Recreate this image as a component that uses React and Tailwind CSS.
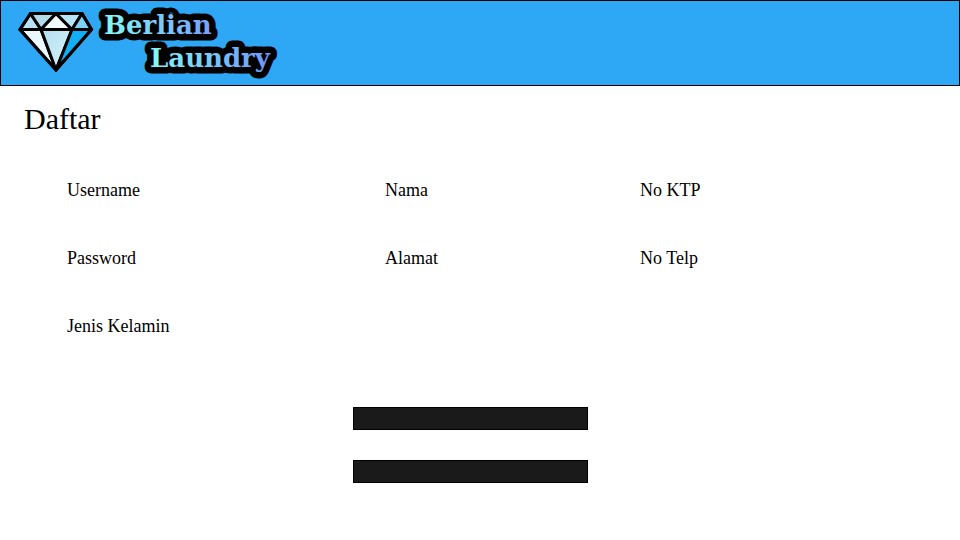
const fields = [
  { id: "username", label: "Username", type: "text" },
  { id: "nama", label: "Nama", type: "text" },
  { id: "ktp", label: "No KTP", type: "text" },
  { id: "password", label: "Password", type: "password" },
  { id: "alamat", label: "Alamat", type: "text" },
  { id: "telp", label: "No Telp", type: "tel" },
  { id: "kelamin", label: "Jenis Kelamin", type: "text" },
];

function Logo() {
  return (
    <svg width="264" height="76" viewBox="14 5 264 76" role="img" aria-label="Berlian Laundry" className="block">
      <defs>
        <linearGradient id="word1" gradientUnits="userSpaceOnUse" x1="102" y1="30" x2="214" y2="20">
          <stop offset="0" stopColor="#83fbf4" />
          <stop offset="1" stopColor="#779dff" />
        </linearGradient>
        <linearGradient id="word2" gradientUnits="userSpaceOnUse" x1="149" y1="62" x2="272" y2="54">
          <stop offset="0" stopColor="#83fbf4" />
          <stop offset="1" stopColor="#6f93fb" />
        </linearGradient>
        <linearGradient id="ice" x1="0" y1="0" x2="1" y2="1">
          <stop offset="0" stopColor="#b4def0" />
          <stop offset="1" stopColor="#d9f3fb" />
        </linearGradient>
      </defs>
      <g stroke="#000" strokeWidth="3" strokeLinejoin="round">
        <path d="M30.500 13.500 L20 29.500 H41Z" fill="#b9e3f4" />
        <path d="M30.500 13.500 H56 L41 29.500Z" fill="#b3dcea" />
        <path d="M56 13.500 L41 29.500 H72Z" fill="#f1fbfe" />
        <path d="M56 13.500 H82 L72 29.500Z" fill="#b6e5f5" />
        <path d="M82 13.500 L91.500 29.500 H72Z" fill="#7ed1f7" />
        <path d="M20 29.500 H41 L56 70Z" fill="#ecf8fd" />
        <path d="M41 29.500 H72 L56 70Z" fill="url(#ice)" />
        <path d="M72 29.500 H91.500 L56 70Z" fill="#12aef5" />
        <path d="M30.500 13.500 H82 L91.500 29.500 L56 70 L20 29.500Z" fill="none" strokeLinejoin="miter" />
      </g>
      <g
        fontFamily="'DejaVu Serif', serif"
        fontWeight="700"
        fontSize="26"
        stroke="#000"
        strokeWidth="13"
        strokeLinejoin="round"
        paintOrder="stroke"
      >
        <text x="104" y="34" fill="url(#word1)">Berlian</text>
        <text x="150" y="67" fill="url(#word2)">Laundry</text>
      </g>
    </svg>
  );
}

export default function App() {
  return (
    <div className="min-h-screen bg-white font-['Liberation_Serif','Times_New_Roman',serif] text-black">
      <header className="border border-black bg-[#2ea8f5] px-[13px] py-1">
        <Logo />
      </header>
      <main>
        <h1 className="px-6 pt-[15px] text-[30px] leading-9">Daftar</h1>
        <form onSubmit={(e) => e.preventDefault()}>
          <div className="mt-[41px] grid grid-cols-[318fr_255fr_320fr] gap-y-5 pl-[67px]">
            {fields.map((f) => (
              <div key={f.id} className="flex flex-col items-start">
                <label htmlFor={f.id} className="text-lg leading-6">
                  {f.label}
                </label>
                <input
                  id={f.id}
                  name={f.id}
                  type={f.type}
                  className="h-6 w-4/5 border-0 bg-transparent text-lg outline-none"
                />
              </div>
            ))}
          </div>
          <div className="mt-[45px] flex flex-col items-center gap-[30px] pr-5 pb-10">
            <button type="submit" aria-label="Daftar" className="h-[23px] w-[235px] border border-black bg-[#1a1a1a]" />
            <button type="reset" aria-label="Batal" className="h-[23px] w-[235px] border border-black bg-[#1a1a1a]" />
          </div>
        </form>
      </main>
    </div>
  );
}
